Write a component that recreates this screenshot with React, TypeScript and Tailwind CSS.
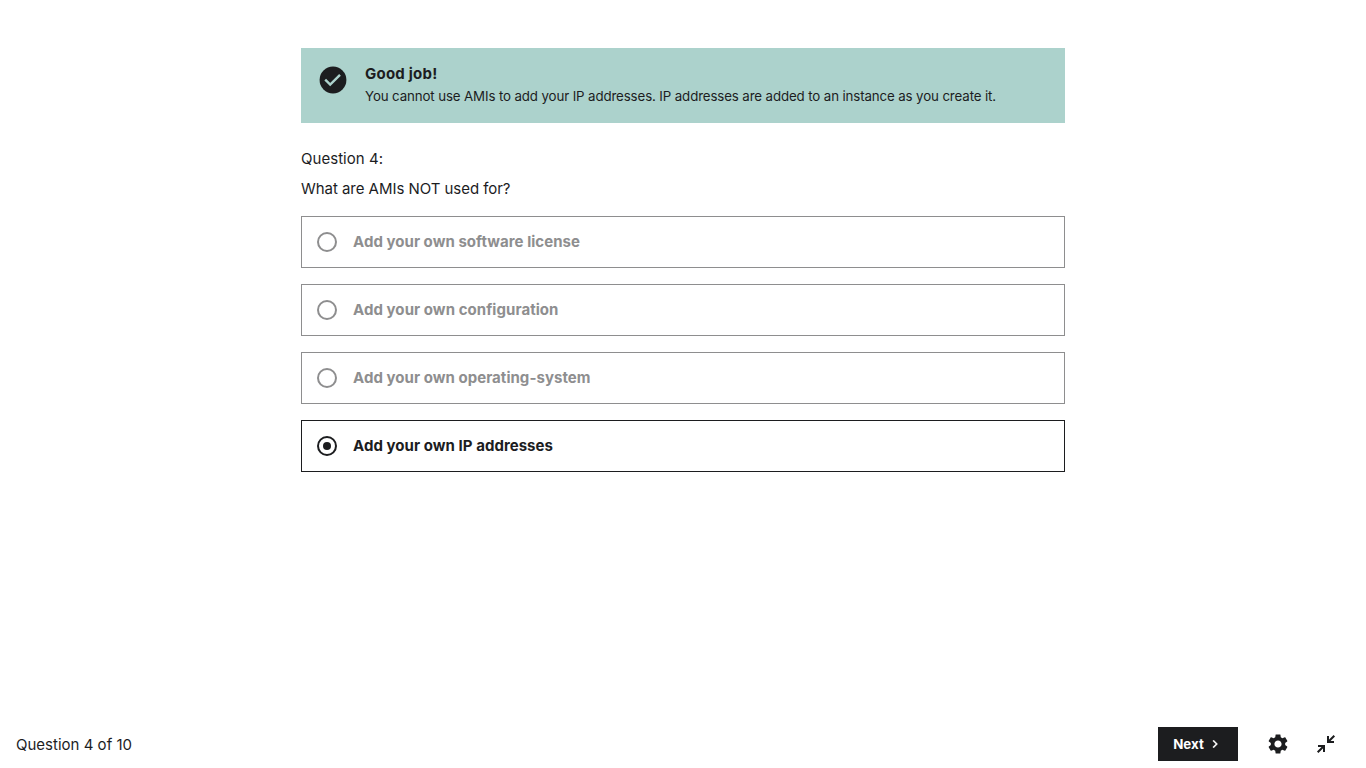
import React from "react";

const options = [
  { label: "Add your own software license", width: 227 },
  { label: "Add your own configuration", width: 205.5 },
  { label: "Add your own operating-system", width: 237.5 },
  { label: "Add your own IP addresses", width: 200, selected: true },
];

function Line({ text, width, size, bold = false }: { text: string; width: number; size: number; bold?: boolean }) {
  const ref = React.useRef<HTMLSpanElement>(null);
  const [gap, setGap] = React.useState(0);
  React.useLayoutEffect(() => {
    if (ref.current) setGap((width - ref.current.getBoundingClientRect().width) / text.length);
  }, []);
  return (
    <span ref={ref} className={`inline-block whitespace-nowrap ${bold ? "font-bold" : "font-normal"}`} style={{ fontSize: size, letterSpacing: gap }}>
      {text}
    </span>
  );
}

function Radio({ selected }: { selected?: boolean }) {
  return (
    <svg width="24" height="24" viewBox="0 0 24 24" className="shrink-0">
      <circle cx="12" cy="12" r="9" fill="none" stroke="currentColor" strokeWidth="2" />
      {selected && <circle cx="12" cy="12" r="4" fill="currentColor" />}
    </svg>
  );
}

export default function App() {
  return (
    <div className="flex h-screen flex-col overflow-hidden bg-white font-['Inter',sans-serif] text-[#1c1d1f]">
      <main className="mx-auto w-[764px] grow pt-12">
        <div className="flex h-[75px] bg-[#acd2cc] pl-4 pt-[15px]">
          <svg width="32" height="32" viewBox="0 0 32 32" className="mt-px shrink-0">
            <circle cx="16" cy="16" r="13.4" fill="currentColor" />
            <path d="M8.2 15.6l5 5 9.8-9.8" fill="none" stroke="#acd2cc" strokeWidth="2.4" />
          </svg>
          <div className="ml-4 flex flex-col">
            <div className="h-[22px] leading-5"><Line text="Good job!" width={72.5} size={15} bold /></div>
            <div className="leading-5"><Line text="You cannot use AMIs to add your IP addresses. IP addresses are added to an instance as you create it." width={631} size={13.3} /></div>
          </div>
        </div>
        <div className="mt-6 h-[22px] leading-[22px]"><Line text="Question 4:" width={82} size={15} /></div>
        <div className="mt-2 h-[21px] leading-[22px]"><Line text="What are AMIs NOT used for?" width={209.5} size={15} /></div>
        <div className="mt-[18px] flex flex-col gap-4">
          {options.map((o) => (
            <div key={o.label} className={`flex h-[52px] items-center gap-3.5 border pl-[13px] ${o.selected ? "border-[#1c1d1f]" : "border-[#8e8e8f] text-[#8e8e8f]"}`}>
              <Radio selected={o.selected} />
              <Line text={o.label} width={o.width} size={15} bold />
            </div>
          ))}
        </div>
      </main>
      <footer className="flex h-12 items-center pl-4">
        <div className="h-[22px] leading-[22px]"><Line text="Question 4 of 10" width={116} size={15} /></div>
        <button className="ml-auto flex h-[34px] w-20 items-center bg-[#1c1d1f] pl-[15px] text-white">
          <span className="h-5 w-[31px] leading-[18px]"><Line text="Next" width={30.5} size={13.3} bold /></span>
          <svg width="16" height="16" viewBox="0 0 24 24" fill="currentColor" stroke="currentColor" strokeWidth="0.4" className="ml-[3px]">
            <path d="M10 6L8.59 7.41 13.17 12l-4.58 4.59L10 18l6-6z" />
          </svg>
        </button>
        <svg width="24" height="24" viewBox="0 0 24 24" fill="currentColor" className="ml-7">
          <path d="M19.14 12.94c.04-.3.06-.61.06-.94 0-.32-.02-.64-.07-.94l2.03-1.58c.18-.14.23-.41.12-.61l-1.92-3.32c-.12-.22-.37-.29-.59-.22l-2.39.96c-.5-.38-1.03-.7-1.62-.94l-.36-2.54c-.04-.24-.24-.41-.48-.41h-3.84c-.24 0-.43.17-.47.41l-.36 2.54c-.59.24-1.13.57-1.62.94l-2.39-.96c-.22-.08-.47 0-.59.22L2.74 8.87c-.12.21-.08.47.12.61l2.03 1.58c-.05.3-.09.63-.09.94s.02.64.07.94l-2.03 1.58c-.18.14-.23.41-.12.61l1.92 3.32c.12.22.37.29.59.22l2.39-.96c.5.38 1.03.7 1.62.94l.36 2.54c.05.24.24.41.48.41h3.84c.24 0 .44-.17.47-.41l.36-2.54c.59-.24 1.13-.56 1.62-.94l2.39.96c.22.08.47 0 .59-.22l1.92-3.32c.12-.22.07-.47-.12-.61l-2.01-1.58zM12 15.6c-1.98 0-3.6-1.62-3.6-3.6s1.62-3.6 3.6-3.6 3.6 1.62 3.6 3.6-1.62 3.6-3.6 3.6z" />
        </svg>
        <svg width="24" height="24" viewBox="0 0 24 24" fill="none" stroke="currentColor" strokeWidth="2" className="ml-6 mr-7">
          <path d="M20.3 3.7l-6 6M14 4v6h6M3.7 20.3l6-6M4 14h6v6" />
        </svg>
      </footer>
    </div>
  );
}
